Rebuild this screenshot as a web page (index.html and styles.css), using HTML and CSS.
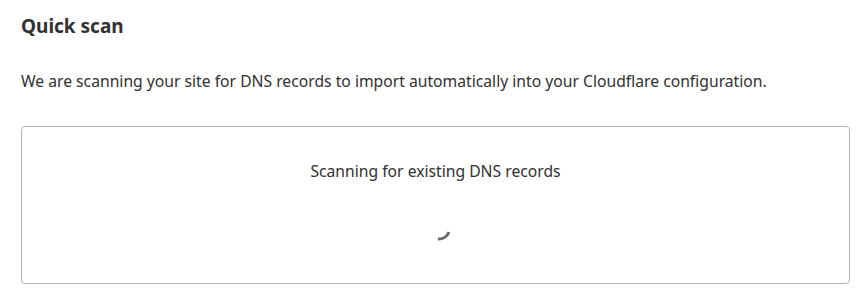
FILE: index.html
```html
<!DOCTYPE html>
<html>
<head>
<meta charset="utf-8">
<link rel="stylesheet" href="styles.css">
</head>
<body>
<main class="page">
  <h2 class="title">Quick scan</h2>
  <p class="desc">We are scanning your site for DNS records to import automatically into your Cloudflare configuration.</p>
  <section class="card">
    <p class="status">Scanning for existing DNS records</p>
    <div class="spinner">
      <svg width="30" height="30" viewBox="0 0 30 30"><path d="M7 25 A11 11 0 0 0 18 18" fill="none" stroke="#6b6b6b" stroke-width="3"/></svg>
    </div>
  </section>
</main>
</body>
</html>
```
FILE: styles.css
```css
html, body { margin: 0; padding: 0; background: #fff; }
body { font-family: "Noto Sans", "Noto Sans CJK KR", sans-serif; color: #333; }
.page { padding: 12px 12px 0 21px; width: 829px; }
.title { margin: 0; font-size: 19px; font-weight: 700; line-height: 28px; color: #313131; }
.desc { margin: 30px 0 0; font-size: 15.7px; line-height: 22px; color: #313131; }
.card { margin-top: 34px; height: 156px; border: 1px solid #b5b5b5; border-radius: 4px; display: flex; flex-direction: column; align-items: center; }
.status { margin: 33px 0 0; font-size: 15.7px; line-height: 22px; color: #313131; }
.spinner { margin: 32px 0 0 20px; height: 30px; }
.spinner svg { display: block; }
```
